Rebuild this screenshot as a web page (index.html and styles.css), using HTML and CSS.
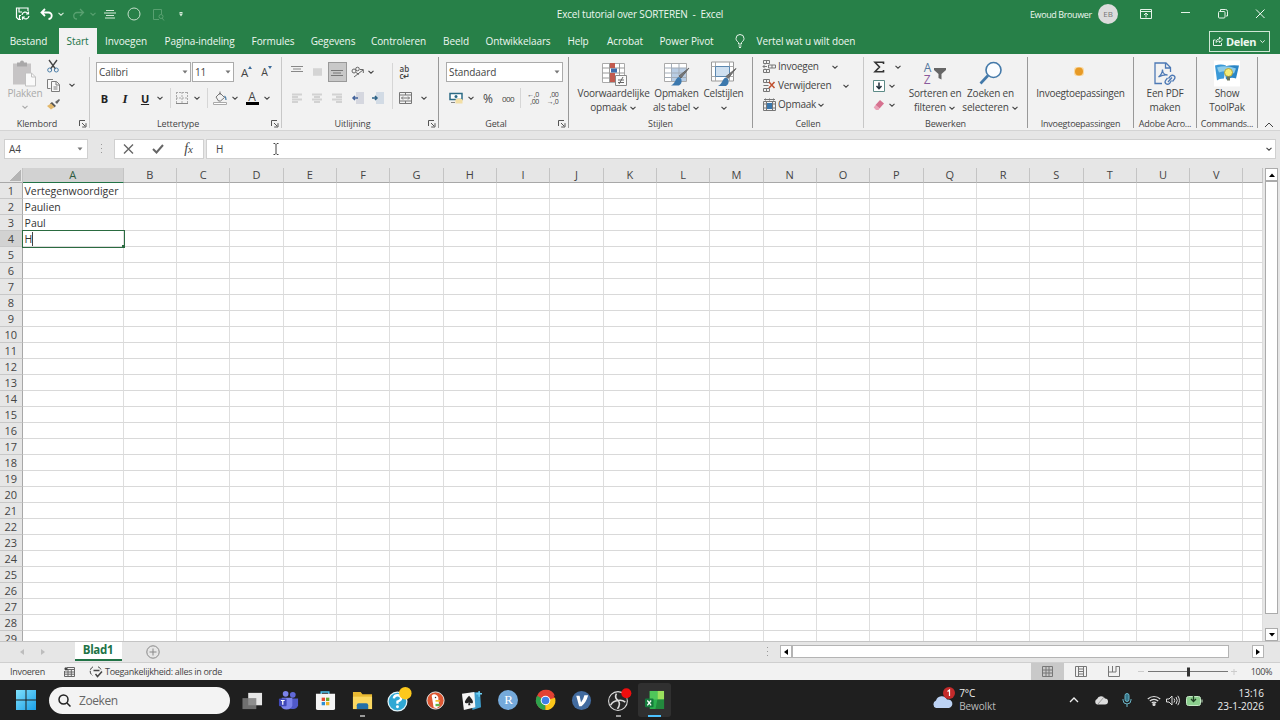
FILE: index.html
```
<!DOCTYPE html>
<html lang="nl">
<head>
    <meta charset="utf-8">
    <title>Excel tutorial over SORTEREN - Excel</title>
    <link rel="stylesheet" href="styles.css">
</head>
<body>
    <svg class="defs">
        <symbol id="chev" viewBox="0 0 8 8"><path d="M1.500 2.800 4 5.200 6.500 2.800" fill="none" stroke="currentColor" stroke-width="1.100"/></symbol>
        <symbol id="launch" viewBox="0 0 8 8"><path d="M.5 6V.5H6M3 3l3 3M7 3.200V7H3.200" fill="none" stroke="#555"/></symbol>
        <symbol id="tri" viewBox="0 0 6 4"><path d="M.5.5h5L3 3.500z" fill="#777"/></symbol>
    </svg>

    <header class="titlebar">
        <div class="quick">
            <svg width="14" height="14" viewBox="0 0 14 14" fill="none" stroke="#fff" stroke-width="1.200"><path d="M5 12.500H2.500l-2-2V1H12v3M3 1v4h3M3.500 12.500V8.500H5"/><path d="M6 8a3.300 3.300 0 0 1 6-1.500M12.500 4.500v2.500H10M13 9a3.300 3.300 0 0 1-6 1.500M6.500 12.700V10H9"/></svg>
            <svg width="14" height="12" viewBox="0 0 14 12" fill="none" stroke="#fff" stroke-width="1.800"><path d="M5 1 1.500 4.500 5 8M2 4.500h6.500a3.200 3.200 0 0 1 0 6.500"/></svg>
            <svg class="pale" width="8" height="8"><use href="#chev"/></svg>
            <svg class="faint" width="14" height="12" viewBox="0 0 14 12" fill="none" stroke="currentColor" stroke-width="1.300"><path d="M8 1l3.500 3.500L8 8M11 4.500H5a3.200 3.200 0 0 0 0 6.500"/></svg>
            <svg class="faint" width="8" height="8"><use href="#chev"/></svg>
            <svg width="12" height="10" viewBox="0 0 12 10" stroke="#d5ead9"><path d="M2 1.500h8M0 4h12M2 6.500h8M1 9h10"/></svg>
            <svg width="14" height="14" viewBox="0 0 14 14" fill="none" stroke="#c4dfca"><circle cx="7" cy="7" r="6"/></svg>
            <svg class="faint" width="13" height="13" viewBox="0 0 13 13" fill="none" stroke="currentColor"><path d="M7 11.500H1.500v-10h8V6M4 1.500h3"/><circle cx="9" cy="8.500" r="2"/><path d="m10 10 2 2.500"/></svg>
            <svg width="6" height="6" viewBox="0 0 6 6" fill="#d5ead9"><path d="M1.500 1h3v1h-3zM1 2.500h4L3 5.500z"/></svg>
        </div>
        <div class="doc-name">Excel tutorial over SORTEREN &nbsp;-&nbsp; Excel</div>
        <div class="account">
            <span class="user">Ewoud Brouwer</span>
            <span class="avatar">EB</span>
            <svg width="12" height="10" viewBox="0 0 12 10" fill="none" stroke="#e6f3e9"><path d="M.5.5h11v9H.5zM.5 2.500h11M6 8.500V4M4 6l2-2 2 2"/></svg>
            <svg width="10" height="10" viewBox="0 0 10 10" stroke="#e6f3e9"><path d="M1 3.500h9"/></svg>
            <svg width="10" height="10" viewBox="0 0 10 10" fill="none" stroke="#e6f3e9"><rect x=".5" y="2.500" width="6.500" height="6.500" rx="1"/><path d="M2.500 2V.5h5a2 2 0 0 1 2 2V7H8"/></svg>
            <svg width="10" height="10" viewBox="0 0 10 10" stroke="#f2faf4"><path d="m1 .5 8.500 8.500M9.500.5 1 9"/></svg>
        </div>
    </header>

    <nav class="tabs">
        <span>Bestand</span>
        <span class="active">Start</span>
        <span>Invoegen</span>
        <span>Pagina-indeling</span>
        <span>Formules</span>
        <span>Gegevens</span>
        <span>Controleren</span>
        <span>Beeld</span>
        <span>Ontwikkelaars</span>
        <span>Help</span>
        <span>Acrobat</span>
        <span>Power Pivot</span>
        <svg width="10" height="14" viewBox="0 0 10 14" fill="none" stroke="#e6f3e9"><path d="M3.500 10V8.500C2.500 7.500 1 6.500 1 4.500a4 4 0 0 1 8 0c0 2-1.500 3-2.500 4V10zM3.500 12h3M4 13.500h2"/></svg>
        <span>Vertel wat u wilt doen</span>
        <div class="share">
            <svg width="10" height="10" viewBox="0 0 10 10" fill="none" stroke="#e6f3e9"><path d="M2.500 4H.5v5.500h8V7M3 6.500c0-2.500 1.500-3.500 3.500-3.500V1l3 3-3 2.500V5C5 5 4 5.500 3 6.500z"/></svg>
            <b>Delen</b>
            <svg width="7" height="7"><use href="#chev"/></svg>
        </div>
    </nav>

    <div class="ribbon">
        <section class="group g-clip">
            <div class="body">
                <div class="big muted">
                    <svg width="24" height="26" viewBox="0 0 24 26"><path d="M0 3h18v21H0z" fill="#c6c4c5"/><path d="M4 2h3a2 2 0 0 1 4 0h3v4H4z" fill="#a9a8a9"/><path d="M12.500 12.500h6l4 4v9h-10z" fill="#fafafa" stroke="#c2c2c2"/><path d="M18.500 12.500v4h4" fill="none" stroke="#c2c2c2"/></svg>
                    <span>Plakken</span>
                    <svg width="8" height="8"><use href="#chev"/></svg>
                </div>
                <div class="stack">
                    <svg width="12" height="13" viewBox="0 0 12 13" fill="none"><path d="m2 0 6.500 9M10 0 3.500 9" stroke="#444" stroke-width="1.300"/><circle cx="2.700" cy="10" r="2" stroke="#4b7ea8"/><circle cx="9.300" cy="10" r="2" stroke="#4b7ea8"/></svg>
                    <svg width="13" height="13" viewBox="0 0 13 13" fill="#f8f8f8" stroke="#7d7d7d"><path d="M3.500 9.500H.5v-9H6"/><path d="M4.500 2.500h5l3 3v7h-8zM9 2.500V6h3.500M6.500 8h4M6.500 10h4"/></svg>
                    <svg width="13" height="11" viewBox="0 0 13 11"><path d="M8 3 12 0l1 1-3 4z" fill="#666"/><path d="m5 3 4 4-2 1.500-4-4z" fill="#555"/><path d="M4 4.500 0 7l4 3.500L7.500 8z" fill="#e3b86b"/></svg>
                </div>
                <svg class="chev" width="8" height="8"><use href="#chev"/></svg>
            </div>
            <footer>Klembord<svg width="8" height="8"><use href="#launch"/></svg></footer>
        </section>

        <section class="group g-font">
            <div class="body rows">
                <div class="row font-1">
                    <div class="combo">Calibri<svg width="6" height="4"><use href="#tri"/></svg></div>
                    <div class="combo">11<svg width="6" height="4"><use href="#tri"/></svg></div>
                    <div class="grow"><span>A</span><svg width="4" height="4" viewBox="0 0 4 4"><path d="M0 3 2 0l2 3z" fill="#3c6c9c"/></svg></div>
                    <div class="grow small"><span>A</span><svg width="4" height="4" viewBox="0 0 4 4"><path d="M0 0h4L2 3z" fill="#3c6c9c"/></svg></div>
                </div>
                <div class="row font-2">
                    <b>B</b><b class="italic">I</b><b class="under">U</b>
                    <svg width="8" height="8"><use href="#chev"/></svg>
                    <i class="sep"></i>
                    <svg width="12" height="12" viewBox="0 0 12 12" fill="none" stroke="#aaa"><path d="M.5 0v12M6 0v12M11.500 0v12M0 .5h12M0 6h12" stroke-dasharray="2 1"/><path d="M0 11.500h12" stroke="#888"/></svg>
                    <svg width="8" height="8"><use href="#chev"/></svg>
                    <i class="sep"></i>
                    <svg width="15" height="14" viewBox="0 0 15 14" fill="none" stroke="#777"><path d="m3 6 4-4 4.500 4.500-4 3.500H5.500zM7 4V.5"/><path d="M11.500 5c1.500 1 1.500 2.500 1.500 4" stroke="#4b7ea8" stroke-width="1.300"/><path d="M.5 11.500h13v2H.5z" fill="#fff" stroke="#aaa"/></svg>
                    <svg width="8" height="8"><use href="#chev"/></svg>
                    <span class="ink">A</span>
                    <svg width="8" height="8"><use href="#chev"/></svg>
                </div>
            </div>
            <footer>Lettertype<svg width="8" height="8"><use href="#launch"/></svg></footer>
        </section>

        <section class="group g-align">
            <div class="body">
                <div class="rows">
                    <div class="row align-1">
                        <svg width="12" height="12" viewBox="0 0 12 12" stroke="#888"><path d="M0 .5h12M2 3h8M0 5.500h12"/></svg>
                        <svg width="12" height="12" viewBox="0 0 12 12" stroke="#d4d4d4"><path d="M2 3.500h9M2 6h9M2 8.500h9" stroke-width="2.400"/></svg>
                        <span class="pressed"><svg width="12" height="12" viewBox="0 0 12 12" stroke="#777"><path d="M0 4.500h12M2 7h8M0 9.500h12"/></svg></span>
                        <svg width="14" height="12" viewBox="0 0 14 12" fill="none" stroke="#666"><path d="M3 11 12 4M9 3.500h3.300V7"/><circle cx="3" cy="5" r="2"/><circle cx="6.500" cy="3" r="1.800"/><path d="m5 6.500 3 2"/></svg>
                        <svg width="8" height="8"><use href="#chev"/></svg>
                    </div>
                    <div class="row align-2">
                        <svg width="12" height="10" viewBox="0 0 12 10" stroke="#d2d2d2" stroke-width="2"><path d="M1 1.500h10M1 4h6M1 6.500h10M1 9h6"/></svg>
                        <svg width="12" height="10" viewBox="0 0 12 10" stroke="#d2d2d2" stroke-width="2"><path d="M1 1.500h10M3 4h6M1 6.500h10M3 9h6"/></svg>
                        <svg width="12" height="10" viewBox="0 0 12 10" stroke="#d2d2d2" stroke-width="2"><path d="M1 1.500h10M5 4h6M1 6.500h10M5 9h6"/></svg>
                        <svg width="12" height="12" viewBox="0 0 12 12"><path d="M4 0h8v12H4z" fill="#d5d7df"/><path d="M6 6H1M3 4 1 6l2 2" fill="none" stroke="#43639b" stroke-width="1.500"/></svg>
                        <svg width="12" height="12" viewBox="0 0 12 12"><path d="M4 0h8v12H4z" fill="#d2dbe5"/><path d="M0 6h5M3 4l2 2-2 2" fill="none" stroke="#2f6488" stroke-width="1.500"/></svg>
                    </div>
                </div>
                <i class="sep"></i>
                <div class="rows">
                    <div class="row wrap-1"><div class="wrap-icon"><span>ab</span><span>c↵</span></div></div>
                    <div class="row wrap-2">
                        <svg width="13" height="12" viewBox="0 0 13 12" fill="none" stroke="#777"><path d="M.5.5h12v11H.5zM.5 3h12M.5 9h12M6.500.5V3M6.500 9v2.500M2.500 6h8M4 4.500 2.500 6 4 7.500M9 4.500 10.500 6 9 7.500"/></svg>
                        <svg width="8" height="8"><use href="#chev"/></svg>
                    </div>
                </div>
            </div>
            <footer>Uitlijning<svg width="8" height="8"><use href="#launch"/></svg></footer>
        </section>

        <section class="group g-number">
            <div class="body rows">
                <div class="row"><div class="combo">Standaard<svg width="6" height="4"><use href="#tri"/></svg></div></div>
                <div class="row number-2">
                    <svg width="14" height="13" viewBox="0 0 14 13"><path d="M1 1.500h12v6H1z" fill="#fff" stroke="#2c6b85" stroke-width="1.500"/><circle cx="7" cy="4.500" r="1.500" fill="#2c6b85"/><ellipse cx="10" cy="8" rx="3.500" ry="1.500" fill="#f3dfa5"/><path d="M6.500 8h7v3.500h-7z" fill="#f3dfa5"/><path d="M2 10.500h4" stroke="#888"/></svg>
                    <svg width="8" height="8"><use href="#chev"/></svg>
                    <span class="pct">%</span>
                    <span class="zeros">000</span>
                    <i class="sep"></i>
                    <span class="dec">←,0<br>,00</span>
                    <span class="dec">,00<br>→,0</span>
                </div>
            </div>
            <footer>Getal<svg width="8" height="8"><use href="#launch"/></svg></footer>
        </section>

        <section class="group g-styles">
            <div class="body">
                <div class="big">
                    <svg width="26" height="25" viewBox="0 0 26 25"><path d="M1.500 2.500h22v19h-22z" fill="#fff" stroke="#aaa"/><path d="M1.500 7h22M1.500 12h22M1.500 17h22M8.500 2.500v19M18.500 2.500v19" stroke="#999"/><path d="M9 2h5v5H9zM9 12h5v9H9z" fill="#c25a4e"/><path d="M10 7.500h6v4h-6z" fill="#3f6cab"/><path d="M14.500 14.500h11v10h-11z" fill="#fafafa" stroke="#888"/><path d="M17 19h6M17 21.500h6M22 16l-4 7" stroke="#666"/></svg>
                    <span>Voorwaardelijke</span><span>opmaak <svg width="8" height="8"><use href="#chev"/></svg></span>
                </div>
                <div class="big">
                    <svg width="27" height="25" viewBox="0 0 27 25"><path d="M1.500 2.500h22v18h-22z" fill="#fff" stroke="#aaa"/><path d="M8 7h15v13H8z" fill="#b9cde4"/><path d="M1.500 7h22M1.500 12h22M1.500 16.500h22M8.500 2.500v18M16 2.500v18" stroke="#a3adb8"/><path d="m26 7-8 10-2-2z" fill="#777" stroke="#666"/><path d="M16 16c-4 1-3 6-8 8.500h8c3-1.500 3-5 2-7z" fill="#3c78ad"/></svg>
                    <span>Opmaken</span><span>als tabel <svg width="8" height="8"><use href="#chev"/></svg></span>
                </div>
                <div class="big">
                    <svg width="27" height="26" viewBox="0 0 27 26"><path d="M1.500 1.500h22v19h-22z" fill="#fff" stroke="#999"/><path d="M1.500 6h22M1.500 16h22M5.500 1.500v19M19.500 1.500v19" stroke="#aaa"/><path d="M5.500 6h14v10h-14z" fill="#cfe0f0" stroke="#5c88b0"/><path d="m26 8-8 10-2-2z" fill="#777" stroke="#666"/><path d="M16 17c-4 1-3 6-8 8.500h8c3-1.500 3-5 2-7z" fill="#3c78ad"/></svg>
                    <span>Celstijlen</span><span><svg width="8" height="8"><use href="#chev"/></svg></span>
                </div>
            </div>
            <footer>Stijlen</footer>
        </section>

        <section class="group g-cells">
            <div class="body list">
                <div><svg width="13" height="13" viewBox="0 0 13 13" fill="none" stroke="#777"><path d="M.5.5h6v3h-6zM.5 9.500h6v3h-6zM3.500 0v4M3.500 9v4M5.500 5h7v3h-7zM9 5v3M4 6.500H0M2 4.500l-2 2 2 2"/></svg><span>Invoegen</span><svg width="8" height="8"><use href="#chev"/></svg></div>
                <div><svg width="13" height="13" viewBox="0 0 13 13" fill="none" stroke="#777"><path d="M.5.5h6v3h-6zM.5 9.500h6v3h-6zM3.500 0v4M3.500 9v4M.5 6.500h5"/><path d="m6 3 5.500 6M11.500 3 6 9" stroke="#c0502f" stroke-width="1.500"/></svg><span>Verwijderen</span><svg width="8" height="8"><use href="#chev"/></svg></div>
                <div><svg width="13" height="13" viewBox="0 0 13 13" fill="none" stroke="#777"><path d="M2.500.5v2M6.500.5v2M10.500.5v2M1 1.500h11M.5 3.500h12v9H.5zM.5 6h12M.5 10h12M3.500 3.500v9M9.500 3.500v9"/><path d="M4 5h5v6H4z" fill="#3c78ad" stroke="none"/></svg><span>Opmaak</span><svg width="8" height="8"><use href="#chev"/></svg></div>
            </div>
            <footer>Cellen</footer>
        </section>

        <section class="group g-edit">
            <div class="body">
                <div class="list">
                    <div><svg width="12" height="12" viewBox="0 0 12 12" fill="none" stroke="#333" stroke-width="1.600"><path d="M10.500 3V1.200H2L6.500 6 2 10.800h8.500V9"/></svg><svg width="8" height="8"><use href="#chev"/></svg></div>
                    <div><svg width="12" height="12" viewBox="0 0 12 12" fill="none"><path d="M.5.5h11v11H.5z" fill="#fff" stroke="#5d8b87"/><path d="M6 2.500v6M3.500 6 6 8.700 8.500 6" stroke="#222f3b" stroke-width="1.500"/></svg><svg width="8" height="8"><use href="#chev"/></svg></div>
                    <div><svg width="12" height="12" viewBox="0 0 12 12"><path d="m7 1 4 3.500-4.500 5-4-3.500z" fill="#d6718f"/><path d="m2.500 6 4 3.500-1 1.500H3L.7 8.500z" fill="#e9a2b7"/></svg><svg width="8" height="8"><use href="#chev"/></svg></div>
                </div>
                <div class="big">
                    <div class="az"><div><span>A</span><em>Z</em></div><svg width="12" height="13" viewBox="0 0 12 13"><path d="M0 1h12v2L7.500 7v5.500l-3-1.500V7L0 3z" fill="#666"/></svg></div>
                    <span>Sorteren en</span><span>filteren <svg width="8" height="8"><use href="#chev"/></svg></span>
                </div>
                <div class="big">
                    <svg width="24" height="25" viewBox="0 0 24 25" fill="none" stroke="#4379a9"><circle cx="14.500" cy="9" r="7.500" fill="#fbfdff" stroke-width="1.600"/><path d="m9 14.500-7.500 8" stroke-width="2.600"/></svg>
                    <span>Zoeken en</span><span>selecteren <svg width="8" height="8"><use href="#chev"/></svg></span>
                </div>
            </div>
            <footer>Bewerken</footer>
        </section>

        <section class="group g-addins">
            <div class="body">
                <div class="big">
                    <svg width="24" height="25" viewBox="0 0 24 25"><rect x="6" y="6" width="10" height="9" rx="3" fill="#f9d9a4"/><circle cx="11" cy="10.500" r="4" fill="#e79a26"/></svg>
                    <span>Invoegtoepassingen</span>
                </div>
            </div>
            <footer>Invoegtoepassingen</footer>
        </section>

        <section class="group g-pdf">
            <div class="body">
                <div class="big">
                    <svg width="22" height="25" viewBox="0 0 22 25" fill="none" stroke="#4d79b5" stroke-width="1.300"><path d="M8 22.500H1V2h11l4.500 4.500V11M11.500 2v5h5"/><path d="M4.500 16C7 14 8.500 11 8.500 8.500c0 3 2 5.500 5 5.500-3-.5-6 .5-9 2z"/><path d="m14.500 17.500 2-2.500c2.500-2 5.500.5 4 3l-2 2.500M17.500 19.500l-2 3c-2.500 2-5.500-.5-4-3l2-2.500M14 21l4-4.500"/></svg>
                    <span>Een PDF</span><span>maken</span>
                </div>
            </div>
            <footer>Adobe Acro...</footer>
        </section>

        <section class="group g-tool">
            <div class="body">
                <div class="big">
                    <svg width="26" height="26" viewBox="0 0 26 26"><path d="M0 0h26v26H0z" fill="#fff"/><path d="M1 5q6-2 11 0l-2 13q-5 0-7 2z" fill="#3b9ad8"/><path d="M10 6q8-2 15-1l-3 13q-5-2-10 1z" fill="#2b86c6"/><path d="M3 7q9-3 19 1l-2 5q-7-4-15-1z" fill="#8ccbe9"/><circle cx="14.500" cy="12" r="4" fill="#f5ec75" stroke="#b5a63b"/><path d="M13 16h3v4h-3z" fill="#68735b"/></svg>
                    <span>Show</span><span>ToolPak</span>
                </div>
            </div>
            <footer>Commands...</footer>
        </section>
        <svg class="collapse" width="10" height="6" viewBox="0 0 10 6" fill="none" stroke="#444"><path d="m1 5 4-4 4 4"/></svg>
    </div>

    <div class="formula">
        <div class="name-box">A4<svg width="6" height="4"><use href="#tri"/></svg></div>
        <svg class="grip" width="3" height="12" viewBox="0 0 3 12" fill="#999"><path d="M1 1h1v1H1zM1 5h1v1H1zM1 9h1v1H1z"/></svg>
        <div class="fx">
            <svg width="11" height="10" viewBox="0 0 11 10" stroke="#666" stroke-width="1.400"><path d="m1 .5 9 9M10 .5l-9 9"/></svg>
            <svg width="12" height="10" viewBox="0 0 12 10" fill="none" stroke="#666" stroke-width="2"><path d="m1 5 3.500 3.500L11 1"/></svg>
            <span>f<small>x</small></span>
        </div>
        <div class="input">
            <span>H</span>
            <svg class="ibeam" width="6" height="12" viewBox="0 0 6 12" fill="none" stroke="#444"><path d="M.5.5H2l1 1 1-1h1.500M3 1.500v9M.5 11.500H2l1-1 1 1h1.500"/></svg>
            <svg class="expand" width="8" height="8"><use href="#chev"/></svg>
        </div>
    </div>

    <div class="sheet-wrap">
        <table class="sheet" id="sheet"></table>
        <div class="vscroll">
            <i><svg width="6" height="4" viewBox="0 0 6 4"><path d="M0 4h6L3 .5z"/></svg></i>
            <div></div>
            <i><svg width="6" height="4" viewBox="0 0 6 4"><path d="M0 0h6L3 3.500z"/></svg></i>
        </div>
    </div>

    <div class="sheet-tabs">
        <svg width="5" height="6" viewBox="0 0 5 6" fill="#bdbdbd"><path d="M4 0v6L0 3z"/></svg>
        <svg width="5" height="6" viewBox="0 0 5 6" fill="#bdbdbd"><path d="M1 0v6l4-3z"/></svg>
        <span class="sheet-tab">Blad1</span>
        <svg class="add" width="14" height="14" viewBox="0 0 14 14" fill="none" stroke="#888"><circle cx="7" cy="7" r="6.200"/><path d="M7 3.500v7M3.500 7h7"/></svg>
        <svg class="grip" width="3" height="12" viewBox="0 0 3 12" fill="#999"><path d="M1 1h1v1H1zM1 5h1v1H1zM1 9h1v1H1z"/></svg>
        <div class="hscroll">
            <i><svg width="4" height="6" viewBox="0 0 4 6"><path d="M4 0v6L0 3z"/></svg></i>
            <div></div>
            <i class="right"><svg width="4" height="6" viewBox="0 0 4 6"><path d="M0 0v6l4-3z"/></svg></i>
        </div>
    </div>

    <div class="status">
        <span class="mode">Invoeren</span>
        <svg width="11" height="10" viewBox="0 0 11 10" fill="none" stroke="#666"><path d="M3 .5h7.500v9H.5V4M3 2.500h7M1 5h9M1 7.200h9M4 3v6M7.300 3v6"/><circle cx="2" cy="1.800" r="1.600" fill="#444" stroke="none"/></svg>
        <svg class="access" width="13" height="12" viewBox="0 0 13 12" fill="none" stroke="#444"><path d="M3 .8A5 5 0 0 0 2.500 9.500M8 .8c2 .8 3 2.200 3.200 3.700" stroke-dasharray="4 1"/><path d="M3.500 4.500h6M5.500 8l2 2.500 4.500-5" stroke-width="1.500"/></svg>
        <span class="check">Toegankelijkheid: alles in orde</span>
        <div class="views">
            <i class="on"><svg width="11" height="11" viewBox="0 0 11 11" fill="none" stroke="#777"><path d="M.5.5h10v10H.5zM.5 4h10M.5 7h10M4 .5v10M7 .5v10"/></svg></i>
            <i><svg width="12" height="11" viewBox="0 0 12 11" fill="none" stroke="#777"><path d="M.5.5h11v10H.5zM3.500.5v10M8.500.5v10M4 3h4M4 5.500h4M4 8h4"/></svg></i>
            <i><svg width="12" height="11" viewBox="0 0 12 11" fill="none" stroke="#777"><path d="M.5 0v10.500h11V.5H8M4.500 0v6M8 0v6H.5"/></svg></i>
        </div>
        <div class="zoom">
            <svg width="98" height="12" viewBox="0 0 98 12"><path d="M0 5.500h6M96 3v6M93 5.500h6" stroke="#ccc"/><path d="M10 5.500h80" stroke="#777"/><path d="M49 1.500h3v9h-3z" fill="#333"/></svg>
            <span>100%</span>
        </div>
    </div>

    <footer class="taskbar">
        <svg width="20" height="20" viewBox="0 0 20 20"><defs><linearGradient id="win" x2="1" y2="1"><stop stop-color="#7fe0fb"/><stop offset="1" stop-color="#1a9fe8"/></linearGradient></defs><path d="M0 0h9.500v9.500H0zM10.500 0H20v9.500h-9.500zM0 10.500h9.500V20H0zM10.500 10.500H20V20h-9.500z" fill="url(#win)"/></svg>
        <div class="search">
            <svg width="13" height="13" viewBox="0 0 13 13" fill="none" stroke="#222" stroke-width="1.500"><circle cx="5.500" cy="5.500" r="4.500"/><path d="m9 9 3.500 3.500"/></svg>
            <span>Zoeken</span>
        </div>
        <div class="apps">
            <svg viewBox="0 0 22 22"><path d="M6.500 3H21v13H6.500z" fill="#e6e6e6"/><path d="M.5 8.500H15V20H.5z" fill="#7e7e7e" fill-opacity=".85"/></svg>
            <svg viewBox="0 0 22 22"><circle cx="8" cy="4" r="3" fill="#7b83eb"/><circle cx="15.500" cy="5" r="3" fill="#6068d8"/><path d="M12 9h9v7q-1 4-5 4t-5-3z" fill="#5059c9"/><path d="M4 8h11v8q-1 4.500-6 4.500T3 16z" fill="#7b83eb"/><rect x="1" y="9" width="8" height="8" rx="1" fill="#4048b8"/><path d="M3 11h4M5 11v4.500" stroke="#fff" stroke-width="1.300"/></svg>
            <svg viewBox="0 0 22 22"><path d="M6.500 5V2h8v3" fill="none" stroke="#4cc3ee" stroke-width="1.500"/><path d="M1 4h20v15q0 2-2 2H3q-2 0-2-2z" fill="#f5f5f5"/><path d="M7 8h3.500v3.500H7z" fill="#e0492c"/><path d="M11.500 8H15v3.500h-3.500z" fill="#6ca82f"/><path d="M7 12.500h3.500V16H7z" fill="#2c8fd6"/><path d="M11.500 12.500H15V16h-3.500z" fill="#f0b429"/></svg>
            <span class="open"><svg viewBox="0 0 22 22"><path d="M1 2h8l2 2.500h10V20H1z" fill="#e9b932"/><path d="M1 7h20v13H1z" fill="#fbd861"/><path d="M5 20v-4q0-2 2-2h8q2 0 2 2v4z" fill="#2470a8"/></svg></span>
            <svg viewBox="0 0 22 22" class="wide"><circle cx="10" cy="12" r="9" fill="#2fa8d4" stroke="#e4f5fb" stroke-width="1.200"/><path d="M6.500 9q.5-3 3.500-3 3.500 0 3.500 3 0 1.500-3.500 3v2" fill="none" stroke="#fff" stroke-width="2.200"/><circle cx="10" cy="17" r="1.400" fill="#fff"/><circle cx="17.500" cy="4" r="6" fill="#fcc81c"/></svg>
            <svg viewBox="0 0 22 22"><circle cx="11" cy="11" r="9" fill="#de5833" stroke="#eee" stroke-width="1"/><path d="M7 6q2-3 6 0 1.500 1.500 1 4l1 7-3 2-3-1z" fill="#fff"/><path d="M11 10.500h4.500v1.800H11z" fill="#f5c12d"/><path d="M11 14.500h4.500v2.500H11z" fill="#65b447"/><circle cx="11" cy="7.800" r=".8" fill="#333"/></svg>
            <svg viewBox="0 0 22 22"><path d="m10 3 10-1 1 16-9 3z" fill="#3d9dcc"/><path d="M1 4 14 2l1 16-12 3z" fill="#f5f5f5"/><path d="M8.500 6Q13 11 12.500 13q-1 2-3.500 0l1 3H7.500l.5-3q-3.500 2-4-.5Q4.500 10 8.500 6z" fill="#222"/><path d="M19 1v6M16 4h6" stroke="#6cd0f5" stroke-width="1.500"/></svg>
            <i class="r-app">R</i>
            <svg viewBox="0 0 22 22"><circle cx="11" cy="11" r="10" fill="#e24133"/><path d="M11 11 2.300 6A10 10 0 0 0 11 21z" fill="#2ea24c"/><path d="M11 11 21 8a10 10 0 0 1-10 13z" fill="#fbc619"/><path d="M2.300 6h18.500A10 10 0 0 0 2.300 6z" fill="#e24133"/><circle cx="11" cy="11" r="5" fill="#fff"/><circle cx="11" cy="11" r="4" fill="#3f7fe8"/></svg>
            <svg viewBox="0 0 22 22"><circle cx="11" cy="11" r="10" fill="#426b9f"/><path d="M5.500 6H9l1.500 7Q13 10 14 5.500h4Q16 13 11 17H8.500z" fill="#fff"/></svg>
            <span class="open"><svg viewBox="0 0 22 22" class="wide"><circle cx="10.500" cy="11.500" r="9" fill="#272727" stroke="#ddd"/><path d="M9 4.500q-2 4 1.500 6.500 4-1 7 1.500M10.500 11q3 3-.5 8M10.500 11q-5 .5-7 4.500" fill="none" stroke="#ddd" stroke-width="1.500"/><circle cx="18.500" cy="4" r="4.800" fill="#ef0e0e"/></svg></span>
            <span class="current"><svg viewBox="0 0 22 22"><path d="M6 1h14q1 0 1 1v18H6z" fill="#2bb04e"/><path d="M14 1h7v9h-7z" fill="#9be05d"/><path d="M6 1h8v9H6z" fill="#4fc65a"/><path d="M14 10h7v10h-9z" fill="#23893d"/><rect x="1" y="9" width="9" height="9" rx="1" fill="#157a3c"/><path d="m3.500 11 4 5M7.500 11l-4 5" stroke="#fff" stroke-width="1.300"/></svg></span>
        </div>
        <div class="weather">
            <svg width="24" height="20" viewBox="0 0 24 20"><path d="M4 18a4 4 0 0 1 0-7.500 6 6 0 0 1 11-1A4.300 4.300 0 0 1 17 18z" fill="#bcd2f4"/><circle cx="17" cy="3" r="6" fill="#c42b2b"/><path d="m15.500 1.500 2-1.500v6" fill="none" stroke="#fff" stroke-width="1.200"/></svg>
            <div>7°C<br><span>Bewolkt</span></div>
        </div>
        <div class="tray">
            <svg width="10" height="6" viewBox="0 0 10 6" fill="none" stroke="#eee" stroke-width="1.300"><path d="m1 5 4-4 4 4"/></svg>
            <svg width="14" height="10" viewBox="0 0 14 10"><path d="M3 9.500a3 3 0 0 1 0-5.500 4.500 4.500 0 0 1 8-.5 3 3 0 0 1 0 6z" fill="#ddd"/><path d="m4 9 6-7" stroke="#999"/></svg>
            <svg width="10" height="14" viewBox="0 0 10 14" fill="none" stroke="#6bb5c7"><rect x="3" y=".5" width="4" height="8" rx="2" fill="#35768a"/><path d="M1 6v1a4 4 0 0 0 8 0V6M5 11v3"/></svg>
            <svg width="14" height="11" viewBox="0 0 14 11" fill="none" stroke="#ddd" stroke-width="1.200"><path d="M.8 4a9 9 0 0 1 12.400 0M2.800 6a6 6 0 0 1 8.400 0M4.800 8a3 3 0 0 1 4.400 0"/><circle cx="7" cy="9.500" r="1" fill="#ddd"/></svg>
            <svg width="14" height="11" viewBox="0 0 14 11" fill="none" stroke="#ddd"><path d="M.5 4H3l3-3v9L3 7H.5zM8 3.500q1.500 2 0 4M10 2q2.500 3.500 0 7M11.800.8q3.200 4.700 0 9.400"/></svg>
            <svg width="17" height="11" viewBox="0 0 17 11"><rect x=".5" y="1.500" width="14" height="9" rx="2" fill="#8ccf8e" stroke="#c5e8c5"/><path d="M16 4.500v3" stroke="#c5e8c5"/><path d="M7.500 0v5.500M5 4l2.500 2.500L10 4" stroke="#1f3f22" fill="none" stroke-width="1.300"/></svg>
        </div>
        <div class="clock">13:16<br>23-1-2026</div>
    </footer>
    <script src="sheet.js"></script>
</body>
</html>
```

FILE: styles.css
```
* {
    box-sizing: border-box;
}

body {
    margin: 0;
    width: 1280px;
    height: 720px;
    overflow: hidden;
    background: #e6e6e6;
    color: #444;
    font-family: "Open Sans", "Noto Sans", sans-serif;
    font-size: 10px;
    font-stretch: 90%;
    letter-spacing: -.1px;
    line-height: 13px;
    white-space: nowrap;
}

svg {
    display: block;
    flex: none;
    overflow: visible;
}

i, em {
    font-style: normal;
}

.defs {
    display: none;
}

/* title bar */
.titlebar {
    display: grid;
    grid-template-columns: 400px 480px 400px;
    align-items: center;
    height: 28px;
    background: #278048;
    color: #eef7f0;
}
.quick {
    display: grid;
    grid-template-columns: 14px 24px 11px 21px 11px 19px 25px 24px 19px;
    padding-left: 16px;
    align-items: center;
    justify-items: end;
}
.pale {
    color: #d5ead9;
}
.faint {
    color: #58a070;
}
.doc-name {
    text-align: center;
    letter-spacing: -.18px;
}
.account {
    display: grid;
    grid-template-columns: 61px 34px 42px 36px 40px 34px;
    align-items: center;
    justify-items: center;
    padding-left: 150px;
}
.user {
    justify-self: start;
    font-size: 9px;
    letter-spacing: -.4px;
}
.avatar {
    width: 20px;
    height: 20px;
    border-radius: 50%;
    background: #dcdcdc;
    color: #777;
    font-size: 8px;
    line-height: 20px;
    text-align: center;
}

/* ribbon tabs */
.tabs {
    display: grid;
    grid-template-columns: 57px 39px 60px 87px 60px 60px 71px 44px 80px 40px 54px 69px 38px 94px 1fr;
    align-items: center;
    justify-items: center;
    height: 26px;
    background: #278048;
    color: #eef7f0;
}
.tabs .active {
    width: 38px;
    height: 26px;
    line-height: 26px;
    margin-left: 2px;
    text-align: center;
    background: #f2f2f2;
    color: #217346;
}
.share {
    display: flex;
    align-items: center;
    justify-content: space-between;
    justify-self: end;
    width: 61px;
    height: 21px;
    margin-right: 10px;
    padding: 0 3px;
    border: 1px solid #cfe6d5;
    font-size: 11px;
    letter-spacing: -.3px;
}

/* ribbon */
.ribbon {
    display: flex;
    height: 77px;
    padding-top: 3px;
    background: #f2f2f2;
    border-bottom: 1px solid #d4d4d4;
}
.group {
    display: flex;
    flex-direction: column;
    height: 71px;
    border-right: 1px solid #c8c8c8;
}
.group .body {
    display: flex;
    height: 58px;
}
.group footer {
    display: flex;
    justify-content: center;
    position: relative;
    height: 13px;
    padding-top: 3px;
    font-size: 9px;
    line-height: 12px;
}
.group footer svg {
    position: absolute;
    right: 2px;
    top: 5px;
}
.g-clip footer, .g-font footer, .g-align footer, .g-number footer {
    padding-right: 15px;
}
.g-clip { width: 90px; }
.g-font { width: 192px; }
.g-align { width: 157px; }
.g-number { width: 130px; }
.g-styles { width: 184px; }
.g-cells { width: 111px; }
.g-edit { width: 164px; }
.g-addins { width: 106px; }
.g-pdf { width: 63px; }
.g-tool { width: 61px; }
.g-number, .g-styles, .g-edit, .g-addins, .g-pdf, .g-tool, .g-align {
    border-color: #999;
}

.big {
    display: flex;
    flex-direction: column;
    align-items: center;
    padding-top: 3px;
}
.big > svg:first-child, .big > .az {
    height: 27px;
}
.big > span {
    display: flex;
    align-items: center;
    gap: 2px;
    min-height: 13px;
    letter-spacing: -.2px;
}
.big > span + span {
    margin-top: 1px;
}
.muted {
    color: #aaa;
}
.g-clip .big {
    width: 42px;
    margin-left: 4px;
}
.g-clip .big > svg:last-child {
    margin-top: 3px;
}
.g-clip .stack {
    display: grid;
    grid-template-rows: 19px 19px 19px;
    align-items: center;
    width: 22px;
    padding-left: 1px;
}
.g-clip .chev {
    margin-top: 24px;
}

.rows {
    display: flex;
    flex-direction: column;
    gap: 6px;
    padding-top: 5px;
}
.row {
    display: grid;
    align-items: center;
    justify-items: center;
    height: 20px;
}
.combo {
    display: flex;
    align-items: center;
    justify-content: space-between;
    justify-self: stretch;
    height: 20px;
    padding: 0 2px;
    background: #fff;
    border: 1px solid #ababab;
}
.sep {
    width: 1px;
    height: 20px;
    background: #d6d6d6;
}
.g-font .body {
    padding-left: 6px;
}
.font-1 {
    grid-template-columns: 95px 42px 23px 15px;
    column-gap: 1px;
}
.font-2 {
    grid-template-columns: 17px 24px 16px 14px 6px 18px 12px 8px 18px 12px 22px 8px;
}
.font-2 b {
    color: #222;
    font-size: 11px;
}
.font-2 .italic {
    font-family: "Liberation Serif", serif;
    font-style: italic;
    font-size: 13px;
}
.font-2 .under {
    text-decoration: underline;
}
.grow {
    display: flex;
    font-size: 11.5px;
}
.grow.small {
    font-size: 10.5px;
}
.ink {
    width: 13px;
    height: 14px;
    border-bottom: 3px solid #000;
    font-size: 12px;
    line-height: 11px;
    text-align: center;
}

.g-align .body {
    padding-left: 5px;
}
.g-align .sep {
    height: 46px;
    margin: 6px 4px 0 5px;
}
.g-align .rows:first-child {
    width: 100px;
}
.align-1 {
    grid-template-columns: 20px 20px 20px 22px 4px;
}
.align-2 {
    grid-template-columns: 20px 20px 20px 22px 18px;
}
.wrap-1 {
    grid-template-columns: 16px;
}
.wrap-2 {
    grid-template-columns: 16px 22px;
}
.pressed {
    display: grid;
    place-items: center;
    width: 19px;
    height: 20px;
    background: #c8c8c8;
    border: 1px solid #999;
}
.wrap-icon {
    display: grid;
    font-size: 8px;
    font-weight: 600;
    line-height: 7px;
}

.g-number .rows {
    padding-left: 7px;
    padding-right: 5px;
}
.number-2 {
    grid-template-columns: 20px 10px 24px 16px 8px 18px 21px;
}
.pct {
    font-size: 12px;
}
.zeros {
    font-size: 8px;
    letter-spacing: -.5px;
}
.dec {
    font-size: 7px;
    line-height: 7px;
    letter-spacing: -.5px;
    text-align: right;
}

.g-styles .body {
    display: grid;
    grid-template-columns: 75px 51px 43px;
    padding-left: 7px;
}

.list {
    display: grid !important;
    grid-template-rows: 19px 19px 19px;
}
.list > div {
    display: flex;
    align-items: center;
}
.g-cells .list {
    padding-left: 10px;
}
.g-cells .list span {
    margin-left: 2px;
    letter-spacing: -.25px;
}
.g-cells .list div:nth-child(1) svg:last-child {
    margin-left: 12px;
}
.g-cells .list div:nth-child(2) svg:last-child {
    margin-left: 11px;
}
.g-cells .list div:nth-child(3) svg:last-child {
    margin-left: 1px;
}
.g-edit .body {
    display: grid;
    grid-template-columns: 35px 54px 57px;
    padding-left: 9px;
}
.g-edit .list > div {
    gap: 3px;
}
.g-edit .list div:first-child {
    gap: 9px;
}
.az {
    display: flex;
    align-items: center;
    gap: 3px;
}
.az div {
    display: grid;
    color: #53779e;
    font-size: 12px;
    line-height: 12px;
}
.az em {
    color: #8a5a9c;
}
.g-addins .body, .g-pdf .body, .g-tool .body {
    justify-content: center;
}
.g-addins .big > span {
    letter-spacing: -.27px;
}
.g-addins footer, .g-pdf footer, .g-tool footer {
    letter-spacing: -.25px;
}
.collapse {
    margin: 65px 0 0 6px;
}

/* formula bar */
.formula {
    display: flex;
    align-items: center;
    height: 37px;
    padding: 0 4px 1px 4px;
}
.name-box {
    display: flex;
    align-items: center;
    justify-content: space-between;
    width: 84px;
    height: 20px;
    padding: 0 4px;
    background: #fff;
    border: 1px solid #d0d0d0;
}
.formula .grip {
    margin: 0 11px 0 12px;
}
.fx {
    display: grid;
    grid-template-columns: 27px 32px 29px;
    align-items: center;
    justify-items: center;
    height: 20px;
    background: #fff;
    border: 1px solid #d0d0d0;
}
.fx span {
    font: italic 14px "Liberation Serif", serif;
}
.fx small {
    font-size: 11px;
}
.input {
    display: flex;
    flex: 1;
    align-items: center;
    height: 20px;
    margin-left: 2px;
    padding: 0 2px 0 9px;
    background: #fff;
    border: 1px solid #d0d0d0;
}
.ibeam {
    margin-left: 50px;
}
.expand {
    margin-left: auto;
}

/* worksheet */
.sheet-wrap {
    display: flex;
    height: 473px;
    overflow: hidden;
}
.sheet {
    width: 1263px;
    height: max-content;
    table-layout: fixed;
    border-collapse: separate;
    border-spacing: 0;
    background: #fff;
}
.sheet th, .sheet td {
    height: 16px;
    padding: 0;
    line-height: 14px;
    font-size: 11px;
    font-weight: 400;
    border-right: 1px solid #dedede;
    border-bottom: 1px solid #d9d9d9;
}
.sheet thead th {
    height: 15px;
    background: #e6e6e6;
    border-color: #c4c4c4;
    border-bottom-color: #a8a8a8;
}
.sheet tbody th {
    background: #e6e6e6;
    border-color: #c8c8c8;
    border-right-color: #a8a8a8;
}
.sheet thead th.on {
    background: #d2d2d2;
    border-bottom-color: #217346;
    color: #2f5b40;
}
.sheet tbody th.on {
    background: #d2d2d2;
    border-right-color: #217346;
}
.sheet td {
    padding-left: 2px;
    font-size: 10.5px;
    letter-spacing: -.02px;
    color: #333;
    text-align: left;
}
.sheet td.edit {
    position: relative;
    outline: 1.5px solid #2a6b40;
    outline-offset: -.5px;
}
.edit span {
    border-right: 1px solid #444;
}
.edit::after {
    content: "";
    position: absolute;
    right: -2px;
    bottom: -2px;
    width: 3px;
    height: 3px;
    background: #2a6b40;
}
.corner {
    width: 11px;
    height: 11px;
    margin: 1px 1px 1px auto;
    background: linear-gradient(135deg, transparent 50%, #b4b4b4 50%);
}

.vscroll {
    display: flex;
    flex-direction: column;
    width: 13px;
    margin-left: 2px;
}
.vscroll i, .vscroll div {
    display: grid;
    place-items: center;
    height: 13px;
    background: #fff;
    border: 1px solid #ababab;
}
.vscroll div {
    height: 433px;
    margin-bottom: 14px;
}

/* sheet tabs and scrollbar */
.sheet-tabs {
    display: flex;
    align-items: center;
    height: 21px;
    padding-left: 20px;
    border-top: 1px solid #c4c4c4;
}
.sheet-tabs svg + svg {
    margin-left: 15px;
}
.sheet-tab {
    align-self: flex-start;
    width: 47px;
    height: 19px;
    margin-left: 30px;
    padding-right: 1px;
    background: #fff;
    border-bottom: 2px solid #217346;
    color: #217346;
    font-size: 11.5px;
    font-weight: 700;
    letter-spacing: -.3px;
    line-height: 16px;
    text-align: center;
}
.sheet-tabs .add {
    margin-left: 24px;
}
.sheet-tabs .grip {
    margin: 0 11px 0 606px;
}
.hscroll {
    display: flex;
    width: 484px;
    padding-bottom: 1px;
}
.hscroll i, .hscroll div {
    display: grid;
    place-items: center;
    width: 12px;
    height: 13px;
    background: #fff;
    border: 1px solid #b4b4b4;
}
.hscroll div {
    width: 437px;
}
.hscroll .right {
    margin-left: auto;
}

/* status bar */
.status {
    display: flex;
    align-items: center;
    height: 18px;
    padding-left: 10px;
    background: #f2f2f2;
    border-top: 1px solid #cfcfcf;
    font-size: 9px;
    letter-spacing: -.4px;
}
.mode {
    width: 54px;
    letter-spacing: -.5px;
    letter-spacing: -.3px;
}
.check {
    letter-spacing: -.3px;
}
.access {
    margin: 0 2px 0 15px;
}
.views {
    display: flex;
    margin-left: auto;
}
.views i {
    display: grid;
    place-items: center;
    width: 33px;
    height: 17px;
}
.views .on {
    background: #c9c9c9;
}
.zoom {
    display: flex;
    align-items: center;
    gap: 14px;
    margin: 0 8px;
}
.zoom span {
    width: 22px;
    text-align: right;
}

/* taskbar */
.taskbar {
    display: flex;
    align-items: center;
    height: 40px;
    padding-left: 16px;
    background: #1f1f1f;
    color: #eee;
}
.search {
    display: flex;
    align-items: center;
    gap: 8px;
    width: 181px;
    height: 27px;
    margin-left: 13px;
    padding-left: 9px;
    border-radius: 14px;
    background: #f3f3f3;
    color: #666;
    font-size: 12px;
    letter-spacing: -.4px;
}
.apps {
    display: grid;
    grid-template-columns: repeat(12, 36.6px);
    align-items: center;
    justify-items: center;
    height: 40px;
    margin-left: 4px;
}
.apps svg {
    width: 21px;
    height: 21px;
}
.apps .wide {
    width: 23px;
    height: 23px;
}
.r-app {
    width: 20px;
    height: 20px;
    border-radius: 50%;
    background: #75aadb;
    color: #fff;
    font: 13px/20px "Liberation Serif", serif;
    text-align: center;
}
.open, .current {
    display: grid;
    place-items: center;
    width: 33px;
    height: 34px;
    border-radius: 3px;
    background: linear-gradient(#999, #999) 50% 32px / 5px 2px no-repeat;
}
.current {
    background: linear-gradient(#4cc2ff, #4cc2ff) 50% 32px / 13px 2px no-repeat #303030;
}
.weather {
    display: flex;
    align-items: center;
    gap: 3px;
    width: 128px;
    margin-left: 259px;
}
.weather span {
    color: #bbb;
}
.tray {
    display: grid;
    grid-template-columns: 28px 26px 26px 27px 12px 31px;
    align-items: center;
    justify-items: center;
}
.clock {
    margin: 0 16px 0 auto;
    text-align: right;
    letter-spacing: 0;
}
```

FILE: sheet.js
```
const columns = 'ABCDEFGHIJKLMNOPQRSTUV'.split('');
const values = { 1: 'Vertegenwoordiger', 2: 'Paulien', 3: 'Paul', 4: '<span>H</span>' };

let html = '<colgroup><col style="width:22.6px"><col style="width:101px">';
columns.slice(1).forEach(() => { html += '<col style="width:53.33px">'; });
html += '<col></colgroup><thead><tr><th><div class="corner"></div></th>';
columns.forEach(c => { html += `<th${c === 'A' ? ' class="on"' : ''}>${c}</th>`; });
html += '<th></th></tr></thead><tbody>';

for (let row = 1; row <= 29; row++) {
    html += `<tr><th${row === 4 ? ' class="on"' : ''}>${row}</th>`;
    html += `<td${row === 4 ? ' class="edit"' : ''}>${values[row] || ''}</td>`;
    html += '<td></td>'.repeat(columns.length) + '</tr>';
}

document.getElementById('sheet').innerHTML = html + '</tbody>';
```
